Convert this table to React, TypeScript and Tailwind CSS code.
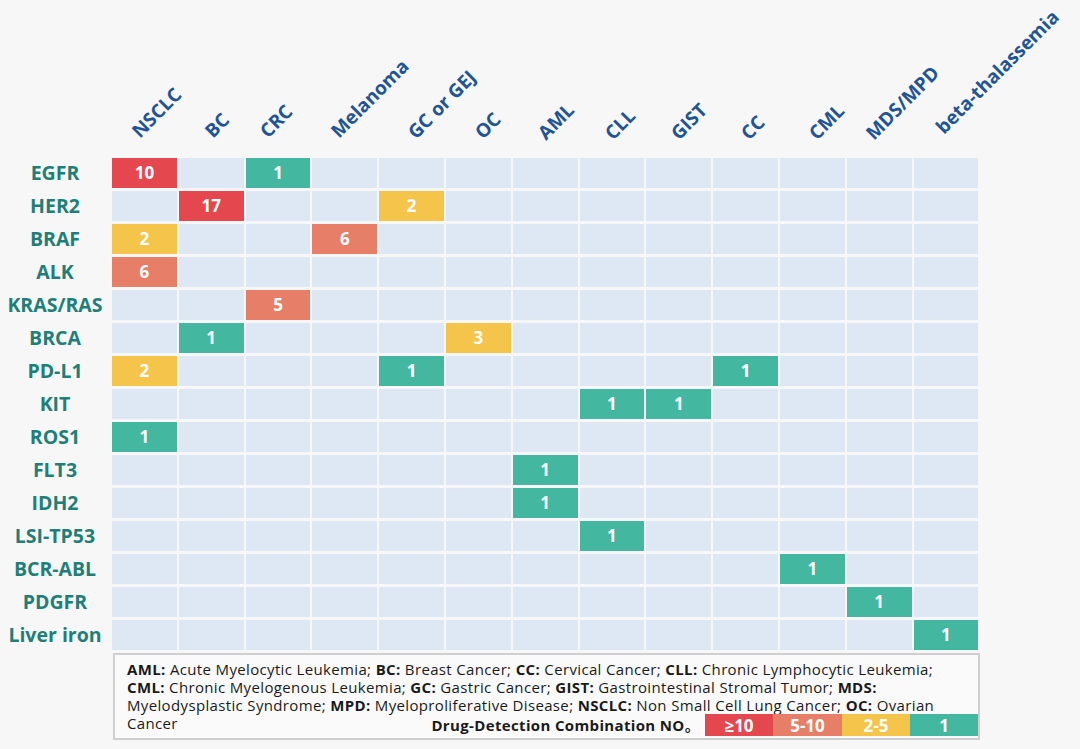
import React from "react";

const cols = [
  "NSCLC",
  "BC",
  "CRC",
  "Melanoma",
  "GC or GEJ",
  "OC",
  "AML",
  "CLL",
  "GIST",
  "CC",
  "CML",
  "MDS/MPD",
  "beta-thalassemia",
];

const headerPos: { left: string; bottom: string }[] = [
  { left: "left-[30px]", bottom: "bottom-[17px]" },
  { left: "left-[36px]", bottom: "bottom-[17px]" },
  { left: "left-[24px]", bottom: "bottom-[17px]" },
  { left: "left-[29px]", bottom: "bottom-[17px]" },
  { left: "left-[39px]", bottom: "bottom-[16px]" },
  { left: "left-[39px]", bottom: "bottom-[16px]" },
  { left: "left-[35px]", bottom: "bottom-[15px]" },
  { left: "left-[35px]", bottom: "bottom-[15px]" },
  { left: "left-[35px]", bottom: "bottom-[15px]" },
  { left: "left-[38px]", bottom: "bottom-[15px]" },
  { left: "left-[39px]", bottom: "bottom-[15px]" },
  { left: "left-[29px]", bottom: "bottom-[15px]" },
  { left: "left-[32px]", bottom: "bottom-[21px]" },
];

const rows: { name: string; vals: Record<number, number> }[] = [
  { name: "EGFR", vals: { 0: 10, 2: 1 } },
  { name: "HER2", vals: { 1: 17, 4: 2 } },
  { name: "BRAF", vals: { 0: 2, 3: 6 } },
  { name: "ALK", vals: { 0: 6 } },
  { name: "KRAS/RAS", vals: { 2: 5 } },
  { name: "BRCA", vals: { 1: 1, 5: 3 } },
  { name: "PD-L1", vals: { 0: 2, 4: 1, 9: 1 } },
  { name: "KIT", vals: { 7: 1, 8: 1 } },
  { name: "ROS1", vals: { 0: 1 } },
  { name: "FLT3", vals: { 6: 1 } },
  { name: "IDH2", vals: { 6: 1 } },
  { name: "LSI-TP53", vals: { 7: 1 } },
  { name: "BCR-ABL", vals: { 10: 1 } },
  { name: "PDGFR", vals: { 11: 1 } },
  { name: "Liver iron", vals: { 12: 1 } },
];

function cellColor(v: number | undefined) {
  if (v === undefined) return "bg-[#dde8f4]";
  if (v >= 10) return "bg-[#e4474e]";
  if (v >= 5) return "bg-[#e67e68]";
  if (v >= 2) return "bg-[#f5c44b]";
  return "bg-[#43b79f]";
}

const B = ({ children }: { children: React.ReactNode }) => (
  <span className="font-bold">{children}</span>
);

export default function App() {
  return (
    <div
      className="w-[1080px] h-[749px] overflow-hidden bg-[#f7f7f7]"
      style={{ fontFamily: '"Open Sans", "Noto Sans CJK SC", sans-serif' }}
    >
      {/* header */}
      <div className="grid grid-cols-[110px_repeat(13,64.8px)] gap-x-[2px] h-[158px]">
        <div />
        {cols.map((c, i) => (
          <div key={c} className="relative h-full">
            <span
              className={`absolute ${headerPos[i].left} ${headerPos[i].bottom} origin-bottom-left -rotate-45 whitespace-nowrap leading-none text-[19px] font-bold text-[#1f5496]`}
            >
              {c}
            </span>
          </div>
        ))}
      </div>

      {/* body grid */}
      <div className="grid grid-cols-[110px_repeat(13,64.8px)] gap-x-[2px] gap-y-[3px]">
        {rows.map((r) => (
          <React.Fragment key={r.name}>
            <div className="h-[30px] flex items-center justify-center text-[19.5px] font-bold text-[#1f7f78] whitespace-nowrap">
              {r.name}
            </div>
            {cols.map((_, ci) => {
              const v = r.vals[ci];
              return (
                <div
                  key={ci}
                  className={`h-[30px] flex items-center justify-center text-[17px] font-bold text-white ${cellColor(v)}`}
                >
                  {v ?? ""}
                </div>
              );
            })}
          </React.Fragment>
        ))}
      </div>

      {/* legend */}
      <div className="ml-[113px] mt-[3px] w-[867px] h-[87px] border-2 border-[#cfcfcf] bg-[#fafafa] pl-[12px] pr-[12px] pt-[5px] text-[15px] tracking-[0.35px] leading-[18px] text-[#1a1a1a]">
        <div className="whitespace-nowrap">
          <B>AML:</B> Acute Myelocytic Leukemia; <B>BC:</B> Breast Cancer; <B>CC:</B> Cervical Cancer;{" "}
          <B>CLL:</B> Chronic Lymphocytic Leukemia;
        </div>
        <div className="whitespace-nowrap">
          <B>CML:</B> Chronic Myelogenous Leukemia; <B>GC:</B> Gastric Cancer; <B>GIST:</B> Gastrointestinal
          Stromal Tumor; <B>MDS:</B>
        </div>
        <div className="whitespace-nowrap">
          Myelodysplastic Syndrome; <B>MPD:</B> Myeloproliferative Disease; <B>NSCLC:</B> Non Small Cell Lung
          Cancer; <B>OC:</B> Ovarian
        </div>
        <div className="flex justify-between items-start">
          <span>Cancer</span>
          <div className="flex items-center -mr-[12px]">
            <span className="font-bold mr-[5px] whitespace-nowrap">Drug-Detection Combination NO。</span>
            <div className="flex h-[22px] text-white font-bold text-[17px] leading-none tracking-normal">
              <div className="w-[68px] flex items-center justify-center bg-[#e4474e]">≥10</div>
              <div className="w-[69px] flex items-center justify-center bg-[#e67e68]">5-10</div>
              <div className="w-[68px] flex items-center justify-center bg-[#f5c44b]">2-5</div>
              <div className="w-[68px] flex items-center justify-center bg-[#43b79f]">1</div>
            </div>
          </div>
        </div>
      </div>
    </div>
  );
}
